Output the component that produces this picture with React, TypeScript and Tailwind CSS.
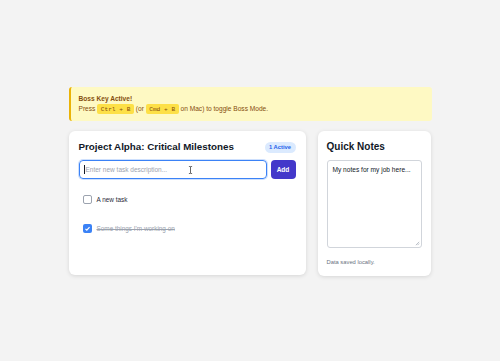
export default function App() {
  return (
    <div
      className="min-h-[361px] w-full bg-[#f3f3f3] pt-[87px]"
      style={{ fontFamily: '"Liberation Sans", Arial, sans-serif' }}
    >
      <div className="mx-auto w-[363px]">
        {/* Boss key banner */}
        <div className="rounded-[3px] border-l-2 border-[#eab308] bg-[#fef9c3] px-[8px] py-[6.5px] text-[6.6px] leading-[10px] text-[#854d0e]">
          <p className="font-bold">Boss Key Active!</p>
          <p>
            Press{" "}
            <kbd className="rounded-[2px] bg-[#fde047] px-[3.5px] py-[1.5px] font-['Liberation_Mono',monospace] text-[6.2px]">
              Ctrl + B
            </kbd>{" "}
            (or{" "}
            <kbd className="rounded-[2px] bg-[#fde047] px-[3.5px] py-[1.5px] font-['Liberation_Mono',monospace] text-[6.2px]">
              Cmd + B
            </kbd>{" "}
            on Mac) to toggle Boss Mode.
          </p>
        </div>

        <div className="mt-[10px] flex gap-[12px]">
          {/* Tasks card */}
          <div className="h-[144px] w-[237px] rounded-[6px] bg-white px-[10px] pt-[9px] shadow-[0_1px_4px_rgba(0,0,0,0.12)]">
            <div className="flex h-[14px] items-center justify-between">
              <h2 className="whitespace-nowrap text-[9.8px] font-bold text-[#111827]">
                Project Alpha: Critical Milestones
              </h2>
              <span className="flex h-[11px] w-[31px] items-center justify-center whitespace-nowrap rounded-full bg-[#dbeafe] text-[5.8px] font-bold text-[#2563eb]">
                1 Active
              </span>
            </div>
            <div className="mt-[6px] flex gap-[4px]">
              <div className="relative flex h-[19px] flex-1 items-center rounded-[4px] border border-[#3b82f6] px-[4px] text-[6.5px] text-[#9ca3af] shadow-[0_0_0_1px_rgba(59,130,246,0.25)]">
                <span className="mr-[1px] h-[9px] w-px bg-[#111827]" />
                Enter new task description...
                <svg viewBox="0 0 6 10" className="absolute left-[108px] top-[5px] h-[8px] w-[5px]">
                  <path d="M1 0.5h1.5L3 1l0.5-0.5H5M3 1v8M1 9.5h1.5L3 9l0.5 0.5H5" stroke="#111" strokeWidth="0.8" fill="none" />
                </svg>
              </div>
              <button className="h-[19px] w-[25px] rounded-[4px] bg-[#4338ca] text-[6.5px] font-bold text-white">
                Add
              </button>
            </div>
            <div className="mt-[16px] flex flex-col gap-[20px] pl-[4px]">
              <label className="flex h-[9px] items-center gap-[5px] text-[6.4px] text-[#1f2937]">
                <span className="h-[9px] w-[9px] rounded-[2px] border border-[#9ca3af] bg-white" />
                A new task
              </label>
              <label className="flex h-[9px] items-center gap-[5px] text-[6.4px] text-[#9ca3af]">
                <span className="flex h-[9px] w-[9px] items-center justify-center rounded-[2px] bg-[#3b82f6]">
                  <svg viewBox="0 0 12 12" className="h-[7px] w-[7px]">
                    <path d="M2.5 6.5l2.3 2.3L9.5 3.5" stroke="white" strokeWidth="2" fill="none" />
                  </svg>
                </span>
                <span className="line-through">Some things I'm working on</span>
              </label>
            </div>
          </div>

          {/* Notes card */}
          <div className="h-[145px] w-[113px] rounded-[6px] bg-white px-[9px] pt-[9px] shadow-[0_1px_4px_rgba(0,0,0,0.12)]">
            <h2 className="h-[14px] text-[10px] font-bold leading-[14px] text-[#111827]">Quick Notes</h2>
            <div className="relative mt-[6px] h-[88px] rounded-[3px] border border-[#d1d5db] px-[5px] py-[4px] text-[6.6px] leading-[9px] text-[#111827]">
              My notes for my job here...
              <svg viewBox="0 0 6 6" className="absolute bottom-[1px] right-[1px] h-[5px] w-[5px]">
                <path d="M1 5L5 1M3 5L5 3" stroke="#9ca3af" strokeWidth="0.8" />
              </svg>
            </div>
            <p className="mt-[10px] text-[5.8px] text-[#6b7280]">Data saved locally.</p>
          </div>
        </div>
      </div>
    </div>
  );
}
